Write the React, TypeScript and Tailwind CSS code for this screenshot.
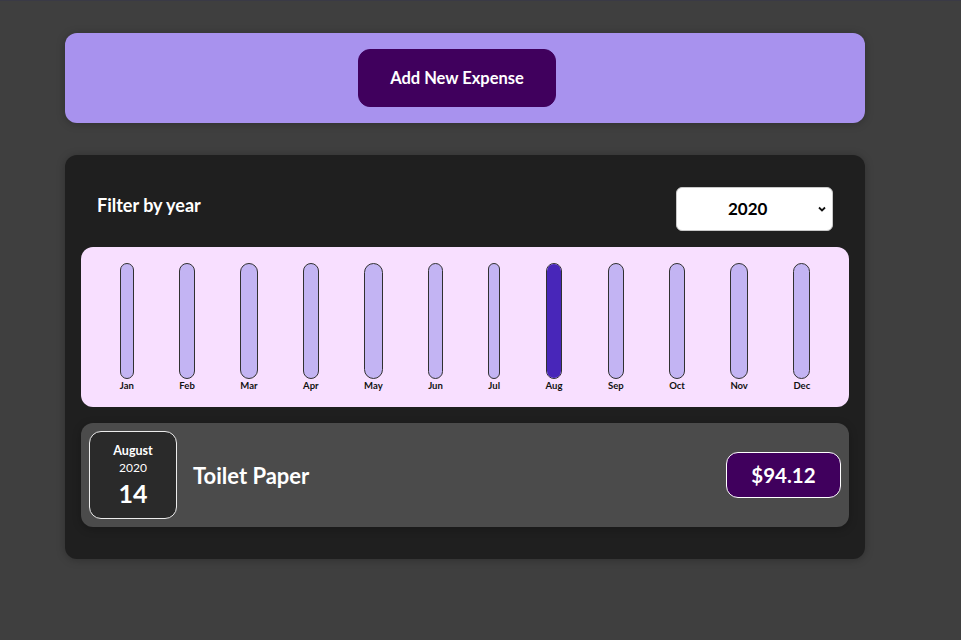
import React from "react";

const months = ["Jan","Feb","Mar","Apr","May","Jun","Jul","Aug","Sep","Oct","Nov","Dec"];
const values = [0,0,0,0,0,0,0,94.12,0,0,0,0];

export default function App() {
  const max = Math.max(...values);
  return (
    <div className="min-h-[640px] bg-[#3f3f3f] border-t border-[#3a3a46]" style={{ fontFamily: "Lato, 'Noto Sans', sans-serif" }}>
      <div className="mx-[65px] mt-[32px] w-[800px] rounded-[12px] bg-[#a892ee] p-4 text-center shadow-[0_1px_8px_rgba(0,0,0,0.25)]">
        <button className="mr-4 h-[58px] w-[198px] rounded-[12px] border border-[#40005d] bg-[#40005d] text-[16.5px] font-bold text-white">
          Add New Expense
        </button>
      </div>
      <div className="mx-[65px] mt-[32px] w-[800px] rounded-[12px] bg-[#1f1f1f] p-4 shadow-[0_1px_8px_rgba(0,0,0,0.25)]">
        <div className="px-4 text-white">
          <div className="my-4 flex items-center justify-between">
            <label className="mb-2 text-[18px] font-bold">Filter by year</label>
            <div className="relative h-[44px] w-[157px]">
              <select defaultValue="2020" className="h-full w-full appearance-none rounded-[6px] border border-[#c8c8c8] bg-white pl-[51px] text-[17px] font-bold text-black outline-none">
                <option>2022</option>
                <option>2021</option>
                <option>2020</option>
                <option>2019</option>
              </select>
              <svg className="pointer-events-none absolute right-[6px] top-[17px]" width="10" height="10" viewBox="0 0 10 10">
                <path d="M2 3.5 L5 6.5 L8 3.5" fill="none" stroke="#111" strokeWidth="1.8" />
              </svg>
            </div>
          </div>
        </div>
        <div className="flex h-[160px] justify-around rounded-[12px] bg-[#f8dfff] p-4 text-center">
          {months.map((m, i) => (
            <div key={m} className="flex h-full flex-col items-center">
              <div className="flex h-full w-full flex-col justify-end overflow-hidden rounded-[12px] border border-[#313131] bg-[#c3b4f3]">
                <div className="w-full bg-[#4826b9]" style={{ height: max > 0 ? `${Math.round((values[i] / max) * 100)}%` : "0%" }} />
              </div>
              <div className="pt-px text-[9.5px] font-bold leading-[11px] text-[#111]">{m}</div>
            </div>
          ))}
        </div>
        <ul>
          <li className="my-4 flex items-center justify-between rounded-[12px] bg-[#4b4b4b] p-2 shadow-[0_2px_8px_rgba(0,0,0,0.25)]">
            <div className="flex h-[88px] w-[88px] flex-col items-center justify-center rounded-[12px] border border-[#ececec] bg-[#2a2a2a] pt-[2px] text-white">
              <div className="text-[12.5px] font-bold leading-[17px]">August</div>
              <div className="text-[12px] leading-[17px]">2020</div>
              <div className="text-[25px] font-bold leading-[34px]">14</div>
            </div>
            <div className="flex flex-1 items-center justify-start">
              <h2 className="mx-4 flex-1 text-[22px] font-bold text-white">Toilet Paper</h2>
              <div className="flex h-[46px] w-[115px] items-center justify-center rounded-[12px] border border-white bg-[#40005d] text-[20.5px] font-bold text-white">
                $94.12
              </div>
            </div>
          </li>
        </ul>
      </div>
    </div>
  );
}
